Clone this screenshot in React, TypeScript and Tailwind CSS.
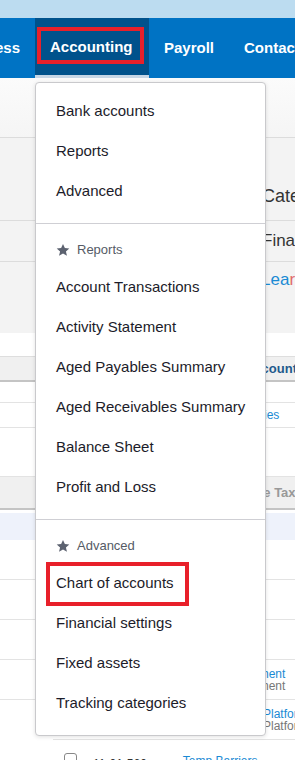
import React from "react";

const font = { fontFamily: '"Liberation Sans", Arial, sans-serif' };

function Star() {
  return (
    <svg width="14" height="14" viewBox="0 0 24 24" className="shrink-0">
      <path
        d="M12 1.5l3.2 7.1 7.6.7-5.8 5.1 1.8 7.6L12 18l-6.8 4 1.8-7.6L1.2 9.3l7.6-.7z"
        fill="#5c6270"
      />
    </svg>
  );
}

function Item({ label, boxed }: { label: string; boxed?: boolean }) {
  return (
    <div className="relative h-[40px] flex items-center pl-[20px] text-[15px] text-[#1c1c2a]">
      {boxed && (
        <div className="absolute left-[10px] top-[-1px] w-[143px] h-[44px] border-[4px] border-[#e8202a]" />
      )}
      <span className="relative">{label}</span>
    </div>
  );
}

function Header({ label }: { label: string }) {
  return (
    <div className="flex items-center gap-[7px] pl-[20px] pt-[18px] pb-[9px] h-[43px] text-[13px] text-[#555b66]">
      <Star />
      <span className="leading-[16px]">{label}</span>
    </div>
  );
}

export default function App() {
  return (
    <div className="relative w-[295px] h-[760px] overflow-hidden bg-white" style={font}>
      {/* top strip */}
      <div className="h-[18px] bg-[#bcdcf0]" />
      {/* nav */}
      <div className="h-[60px] bg-[#0073c4] flex text-white font-bold text-[15px] whitespace-nowrap">
        <div className="shrink-0 w-[35px] flex items-center justify-end pr-[15px] overflow-hidden">
          <span>ess</span>
        </div>
        <div className="shrink-0 relative w-[114px] bg-[#00528c] flex flex-col">
          <div className="flex-1 flex items-center pl-[15px] pt-[1px]">Accounting</div>
          <div className="h-[3px] bg-[#c6d6e6]" />
          <div className="absolute left-[2px] top-[9px] w-[107px] h-[37px] border-[4px] border-[#e8202a]" />
        </div>
        <div className="shrink-0 flex items-center px-[15px]">Payroll</div>
        <div className="shrink-0 flex items-center pl-[15px]">Contacts</div>
      </div>

      {/* gray page header area */}
      <div className="h-[255px] bg-[#f3f3f3] flex flex-col">
        <div className="h-[60px] bg-gradient-to-b from-[#fbfbfb] to-[#f5f5f5] border-b border-[#dcdcdc]" />
        <div className="h-[83px] border-b border-[#dcdcdc] flex items-end pb-[10px] pl-[262px] text-[18px] text-[#333] whitespace-nowrap">
          Categories
        </div>
        <div className="h-[41px] border-b border-[#dcdcdc] flex items-center pl-[262px] text-[17px] text-[#333] whitespace-nowrap">
          Financial
        </div>
        <div className="h-[29px] flex items-start pl-[261px] text-[17px] text-[#1a8ad4] whitespace-nowrap pt-[8px] leading-[20px]">
          Lea<span className="text-[#e06a6a]">rn</span>
        </div>
      </div>

      {/* table area */}
      <div className="flex flex-col text-[12px] whitespace-nowrap">
        <div className="h-[23px] bg-white" />
        <div className="h-[26px] bg-[#f0f0f0] border-t border-[#dedede] border-b-2 border-b-[#c4c4c4] flex items-center pl-[245px] font-bold text-[13px] text-[#1f5a8c]">
          Account
        </div>
        <div className="h-[21px] border-b border-[#e3e3e3]" />
        <div className="h-[25px] border-b border-[#e3e3e3] flex items-center pl-[230px] text-[#1a8ad4]">
          Liabilities
        </div>
        <div className="h-[49px] border-b border-[#e3e3e3]" />
        <div className="h-[33px] bg-[#f0f0f0] border-b-2 border-b-[#c4c4c4] flex items-center pl-[212px] font-bold text-[13px] text-[#999]">
          Purchase Tax Rate
        </div>
        <div className="h-[3px]" />
        <div className="h-[27px] bg-[#eef2fb]" />
        <div className="h-[40px] border-b border-[#e3e3e3]" />
        <div className="h-[40px] border-b border-[#e3e3e3]" />
        <div className="h-[40px] border-b border-[#e3e3e3]" />
        <div className="h-[40px] border-b border-[#e3e3e3] flex flex-col justify-center pl-[228px] leading-[12px] text-[12px]">
          <span className="text-[#1a8ad4]">Equipment</span>
          <span className="text-[#777]">Equipment</span>
        </div>
        <div className="h-[40px] ml-[53px] border-b border-[#e3e3e3] flex flex-col justify-center pl-[210px] leading-[12px] text-[12px]">
          <span className="text-[#1a8ad4]">Platform</span>
          <span className="text-[#777]">Platform</span>
        </div>
        <div className="h-[30px] flex items-start pt-[12px] pl-[64px] text-[12px]">
          <div className="shrink-0 w-[13px] h-[13px] border border-[#888] rounded-[3px] mt-[1px]" />
          <span className="ml-[16px] text-[#333] mt-[3px]">11-01-560</span>
          <span className="ml-[36px] text-[#1a8ad4] text-[12px]">Temp Barriers</span>
        </div>
      </div>

      {/* dropdown menu overlay */}
      <div className="absolute left-[35px] top-[82px] w-[231px] h-[654px] bg-white border border-[#c9c9cc] rounded-[4px] shadow-[0_1px_4px_rgba(0,0,0,0.12)] whitespace-nowrap">
        <div className="pt-[8px]">
          <Item label="Bank accounts" />
          <Item label="Reports" />
          <Item label="Advanced" />
        </div>
        <div className="mt-[12px] border-t border-[#cfcfd4]" />
        <Header label="Reports" />
        <Item label="Account Transactions" />
        <Item label="Activity Statement" />
        <Item label="Aged Payables Summary" />
        <Item label="Aged Receivables Summary" />
        <Item label="Balance Sheet" />
        <Item label="Profit and Loss" />
        <div className="mt-[12px] border-t border-[#cfcfd4]" />
        <Header label="Advanced" />
        <Item label="Chart of accounts" boxed />
        <Item label="Financial settings" />
        <Item label="Fixed assets" />
        <Item label="Tracking categories" />
      </div>
    </div>
  );
}
